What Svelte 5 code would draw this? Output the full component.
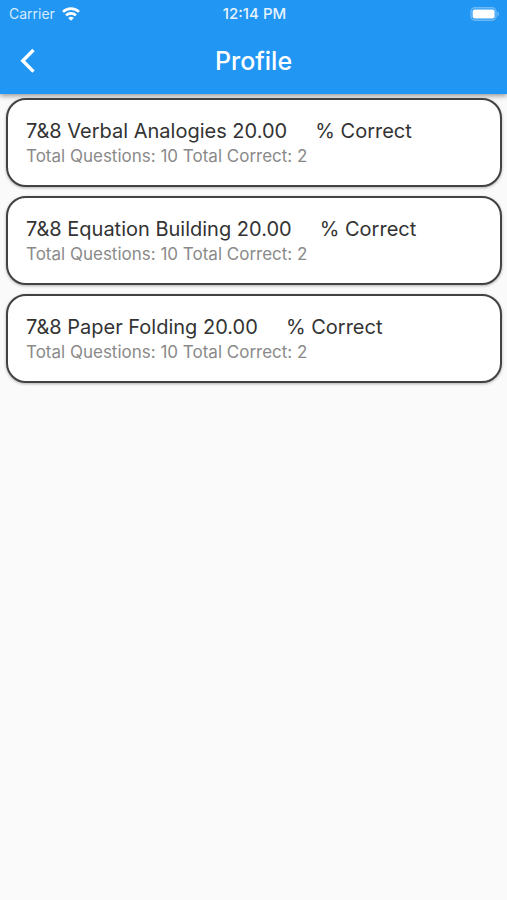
<script>
	let results = [
		{ title: '7&8 Verbal Analogies', percent: 20, questions: 10, correct: 2 },
		{ title: '7&8 Equation Building', percent: 20, questions: 10, correct: 2 },
		{ title: '7&8 Paper Folding', percent: 20, questions: 10, correct: 2 }
	];
</script>

<style>
	:global(body) {
		background: #fafafa;
	}
	.profile {
		font-family: Inter, 'Liberation Sans', sans-serif;
	}
	header {
		color: #fff;
		background: #2196f3;
		box-shadow: 0 2px 5px rgba(0, 0, 0, 0.4);
	}
	.status {
		display: grid;
		grid-template-columns: 1fr auto 1fr;
		align-items: center;
		height: 27px;
		padding: 0 7px 0 9px;
		font-size: 14px;
	}
	.carrier {
		display: flex;
		align-items: center;
		gap: 7px;
		color: #d6ebfd;
	}
	.time {
		color: #e6f3fe;
		font-size: 15px;
		font-weight: 500;
	}
	.battery {
		justify-self: end;
	}
	.status svg,
	.bar svg {
		display: block;
	}
	.bar {
		display: grid;
		grid-template-columns: 56px 1fr 56px;
		align-items: center;
		height: 67px;
	}
	.bar button {
		display: flex;
		align-items: center;
		justify-content: center;
		height: 56px;
		padding: 0;
		border: none;
		color: inherit;
		background: none;
	}
	h1 {
		margin: 0;
		font-size: 25px;
		font-weight: 500;
		line-height: 30px;
		text-align: center;
	}
	ul {
		display: flex;
		flex-direction: column;
		gap: 9px;
		margin: 0;
		padding: 4px 5px 4px 6px;
		list-style: none;
	}
	li {
		padding: 19px 18px 17px;
		border: 2px solid #424242;
		border-radius: 20px;
		background: #fff;
		box-shadow: 0 1px 3px rgba(0, 0, 0, 0.3);
	}
	h2,
	p {
		margin: 0;
		font-weight: 400;
		white-space: pre-wrap;
	}
	h2 {
		color: #333;
		font-size: 20px;
		line-height: 25px;
	}
	p {
		color: #8a8a8a;
		font-size: 17px;
		line-height: 24px;
	}
</style>

<div class="profile">
	<header>
		<div class="status">
			<div class="carrier">
				<span>Carrier</span>
				<svg width="18" height="14" viewBox="0 0 18 14" fill="none" stroke="#fff" stroke-width="2.6">
					<path d="M1 4.9a11.4 11.4 0 0 1 16 0" />
					<path d="M4 8.4a7.2 7.2 0 0 1 10 0" />
					<path d="M6.2 11a4 4 0 0 1 5.6 0L9 13.8z" fill="#fff" stroke="none" />
				</svg>
			</div>
			<span class="time">12:14 PM</span>
			<svg class="battery" width="30" height="14" viewBox="0 0 30 14">
				<rect x="1" y="0.8" width="25" height="12.4" rx="4" fill="none" stroke="#fff" stroke-opacity="0.35" stroke-width="1.4" />
				<rect x="2.6" y="2.4" width="22" height="9.2" rx="2" fill="#fff" />
				<path d="M27.5 4.5q3.2 2.5 0 5z" fill="#fff" fill-opacity="0.4" />
			</svg>
		</div>
		<div class="bar">
			<button aria-label="Back">
				<svg width="16" height="26" viewBox="0 0 16 26" fill="none" stroke="#fff" stroke-width="3.4">
					<path d="M13.5 2 2.8 12.8l10.7 10.8" />
				</svg>
			</button>
			<h1>Profile</h1>
		</div>
	</header>
	<ul>
		{#each results as result}
			<li>
				<h2>{result.title} {result.percent.toFixed(2)}{'     '}% Correct</h2>
				<p>Total Questions: {result.questions} Total Correct: {result.correct}</p>
			</li>
		{/each}
	</ul>
</div>
